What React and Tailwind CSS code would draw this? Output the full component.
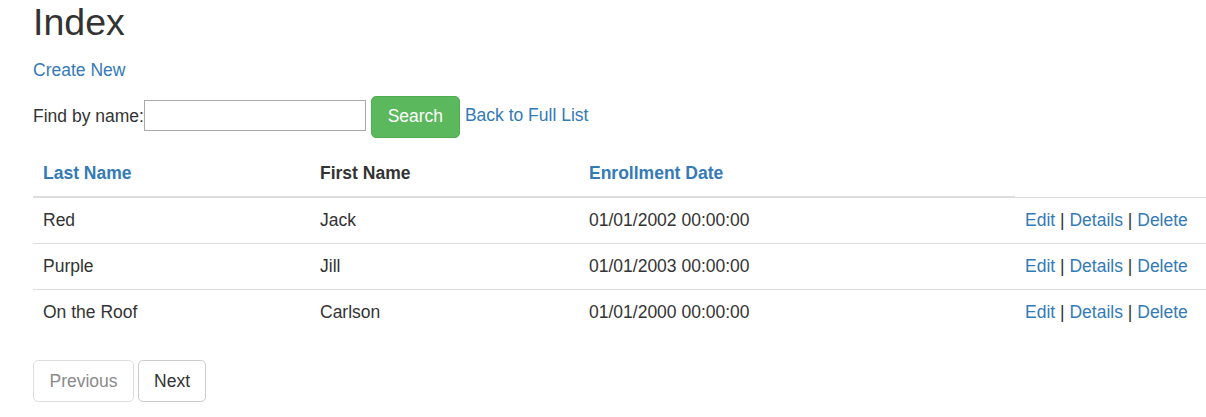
const students = [
  { last: "Red", first: "Jack", date: "01/01/2002 00:00:00" },
  { last: "Purple", first: "Jill", date: "01/01/2003 00:00:00" },
  { last: "On the Roof", first: "Carlson", date: "01/01/2000 00:00:00" },
];

export default function App() {
  return (
    <div className="min-h-screen bg-white pl-[33px] pt-[2px] font-['Liberation_Sans',Arial,sans-serif] text-[17.5px] leading-[25px] text-[#333]">
      {/* Header */}
      <h2 className="text-[37.5px] leading-[41px] font-normal mb-[15px]">Index</h2>
      <p className="mb-[13px]">
        <a href="#" className="text-[#337ab7]">Create New</a>
      </p>

      {/* Search */}
      <div className="flex items-center h-[42px]">
        <span className="-mt-[2px]">Find by name:</span>
        <input
          type="text"
          className="w-[222px] h-[31px] border border-[#a9a9a9] px-1 -mt-[3px] outline-none"
        />
        <button className="ml-[5px] h-[42px] w-[89px] rounded-[5px] border border-[#4cae4c] bg-[#5cb85c] text-white">
          <span className="relative -top-[1px]">Search</span>
        </button>
        <a href="#" className="ml-[5px] text-[#337ab7] -mt-[3px]">Back to Full List</a>
      </div>

      {/* Table */}
      <table className="mt-[13px] w-[1173px] border-collapse text-left">
        <thead>
          <tr>
            <th className="w-[277px] px-[10px] py-[10px] font-bold border-b-[2.5px] border-[#ddd]">
              <a href="#" className="text-[#337ab7]">Last Name</a>
            </th>
            <th className="w-[269px] px-[10px] py-[10px] font-bold border-b-[2.5px] border-[#ddd]">
              First Name
            </th>
            <th className="w-[436px] px-[10px] py-[10px] font-bold border-b-[2.5px] border-[#ddd]">
              <a href="#" className="text-[#337ab7]">Enrollment Date</a>
            </th>
          </tr>
        </thead>
        <tbody>
          {students.map((s) => (
            <tr key={s.last}>
              <td className="px-[10px] py-[10px] border-t border-[#ddd]">{s.last}</td>
              <td className="px-[10px] py-[10px] border-t border-[#ddd]">{s.first}</td>
              <td className="px-[10px] py-[10px] border-t border-[#ddd]">{s.date}</td>
              <td className="px-[10px] py-[10px] border-t border-[#ddd] whitespace-nowrap">
                <a href="#" className="text-[#337ab7]">Edit</a> |{" "}
                <a href="#" className="text-[#337ab7]">Details</a> |{" "}
                <a href="#" className="text-[#337ab7]">Delete</a>
              </td>
            </tr>
          ))}
        </tbody>
      </table>

      {/* Pager */}
      <div className="mt-[25px] flex gap-[4px]">
        <span className="h-[42px] px-[15.5px] flex items-center rounded-[5px] border border-[#dedede] text-[#8a8a8a]">
          Previous
        </span>
        <a href="#" className="h-[42px] px-[15px] flex items-center rounded-[5px] border border-[#ccc] text-[#333]">
          Next
        </a>
      </div>
    </div>
  );
}
